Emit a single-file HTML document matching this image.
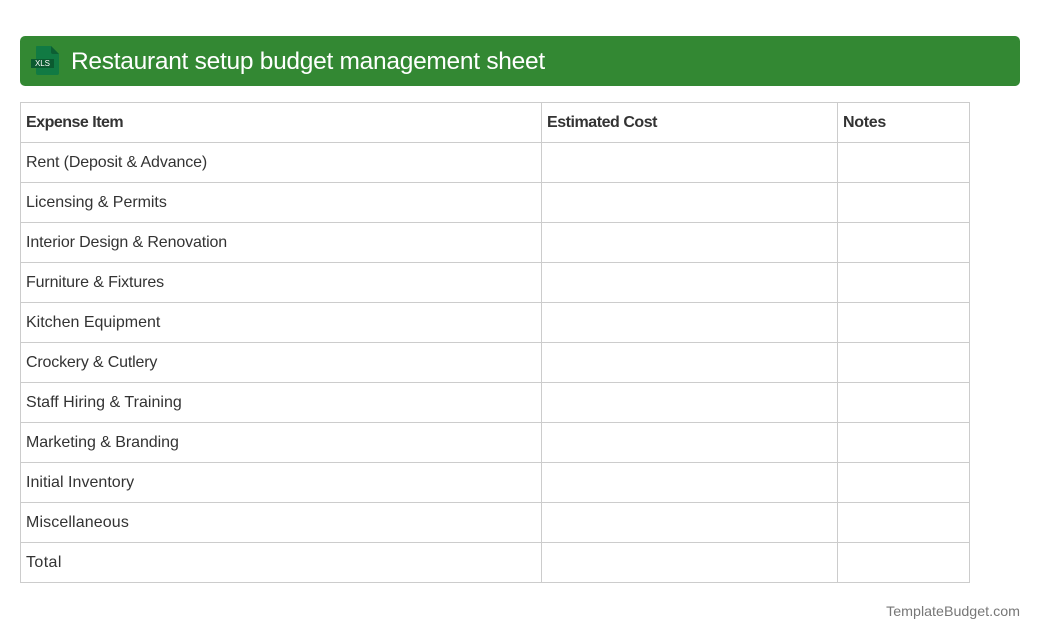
<!DOCTYPE html>
<html lang="en">
<head>
<meta charset="utf-8">
<title>Restaurant setup budget management sheet</title>
<style>
html,body{margin:0;padding:0;background:#fff;}
body{width:1040px;height:640px;position:relative;overflow:hidden;font-family:"Liberation Sans",Arial,sans-serif;color:#333;}
.bar{position:absolute;left:20px;top:36px;width:1000px;height:50px;background:#338833;border-radius:5px;}
.title{position:absolute;left:71px;top:47px;line-height:30px;font-size:24.5px;letter-spacing:-.275px;color:#fff;white-space:nowrap;}
svg.icon{position:absolute;left:28px;top:42px;}
table{position:absolute;left:20px;top:102px;border-collapse:collapse;table-layout:fixed;width:950px;font-size:16px;}
td,th{border:1px solid #ccc;height:39px;padding:1px 5px 0;box-sizing:border-box;text-align:left;white-space:nowrap;}
th{font-weight:bold;}
tr{height:40px;}
.foot{position:absolute;right:20px;top:603px;line-height:18px;font-size:14.25px;color:#777;white-space:nowrap;}
</style>
</head>
<body>
<div class="bar"></div>
<svg class="icon" width="36" height="38" viewBox="0 0 36 38">
  <path d="M9 4H23L31 12V31Q31 33 29 33H10Q8 33 8 31V5Q8 4 9 4Z" fill="#117a43"/>
  <path d="M23 4L31 12H25Q23 12 23 10Z" fill="#0c5f33"/>
  <rect x="3" y="17" width="23" height="9" fill="#0b5a30"/>
  <text x="7" y="24.2" font-family="Liberation Sans, sans-serif" font-size="8" fill="#fff" textLength="15" lengthAdjust="spacing">XLS</text>
</svg>
<div class="title">Restaurant setup budget management sheet</div>
<table>
<colgroup><col style="width:521px"><col style="width:296px"><col style="width:132px"></colgroup>
<tr><th style="letter-spacing:-.5px">Expense Item</th><th style="letter-spacing:-.46px">Estimated Cost</th><th style="letter-spacing:-.3px">Notes</th></tr>
<tr><td style="letter-spacing:-.125px">Rent (Deposit &amp; Advance)</td><td></td><td></td></tr>
<tr><td style="letter-spacing:-.03px">Licensing &amp; Permits</td><td></td><td></td></tr>
<tr><td style="letter-spacing:-.125px">Interior Design &amp; Renovation</td><td></td><td></td></tr>
<tr><td style="letter-spacing:-.125px">Furniture &amp; Fixtures</td><td></td><td></td></tr>
<tr><td>Kitchen Equipment</td><td></td><td></td></tr>
<tr><td style="letter-spacing:-.17px">Crockery &amp; Cutlery</td><td></td><td></td></tr>
<tr><td style="letter-spacing:.02px">Staff Hiring &amp; Training</td><td></td><td></td></tr>
<tr><td style="letter-spacing:-.05px">Marketing &amp; Branding</td><td></td><td></td></tr>
<tr><td style="letter-spacing:.03px">Initial Inventory</td><td></td><td></td></tr>
<tr><td style="letter-spacing:.12px">Miscellaneous</td><td></td><td></td></tr>
<tr><td style="letter-spacing:.4px">Total</td><td></td><td></td></tr>
</table>
<div class="foot">TemplateBudget.com</div>
</body>
</html>
